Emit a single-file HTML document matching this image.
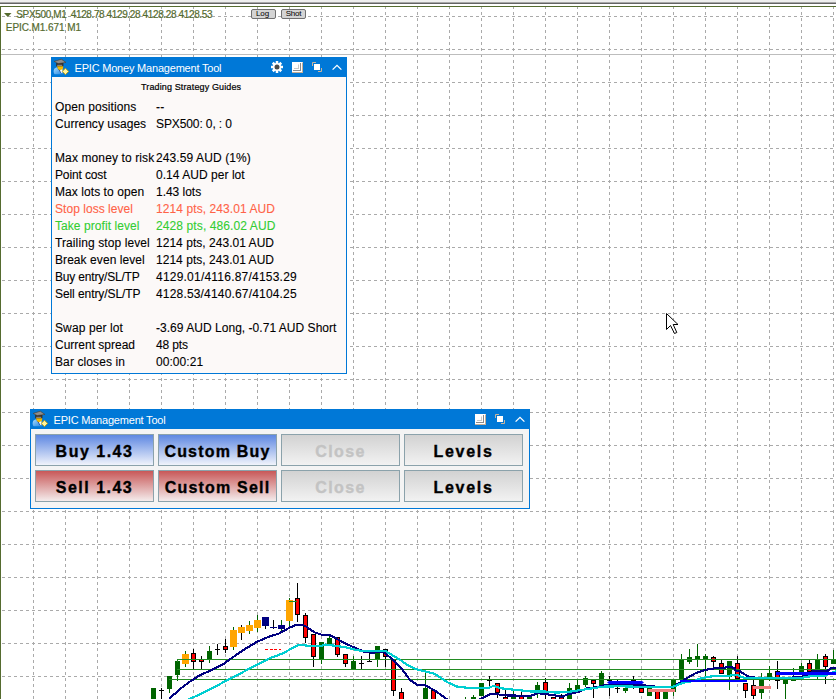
<!DOCTYPE html>
<html><head><meta charset="utf-8">
<style>
html,body{margin:0;padding:0;}
body{width:836px;height:699px;position:relative;overflow:hidden;background:#fff;font-family:"Liberation Sans",sans-serif;}
.abs{position:absolute;}
svg{position:absolute;left:0;top:0;}
.t{position:absolute;white-space:nowrap;}
</style></head><body>
<div class="abs" style="left:0;top:0;width:836px;height:2px;background:#efefef"></div>
<div class="abs" style="left:0;top:2px;width:836px;height:1px;background:#a8a8a8"></div>
<div class="abs" style="left:0;top:3px;width:836px;height:1px;background:#646464"></div>
<svg width="836" height="699" shape-rendering="crispEdges">
<g stroke="#aaaaaa" stroke-width="1" stroke-dasharray="3 3" stroke-dashoffset="5">
<line x1="1" y1="16.5" x2="836" y2="16.5"/>
<line x1="1" y1="49.5" x2="836" y2="49.5"/>
<line x1="1" y1="82.5" x2="836" y2="82.5"/>
<line x1="1" y1="115.5" x2="836" y2="115.5"/>
<line x1="1" y1="148.5" x2="836" y2="148.5"/>
<line x1="1" y1="181.5" x2="836" y2="181.5"/>
<line x1="1" y1="214.5" x2="836" y2="214.5"/>
<line x1="1" y1="247.5" x2="836" y2="247.5"/>
<line x1="1" y1="280.5" x2="836" y2="280.5"/>
<line x1="1" y1="313.5" x2="836" y2="313.5"/>
<line x1="1" y1="346.5" x2="836" y2="346.5"/>
<line x1="1" y1="379.5" x2="836" y2="379.5"/>
<line x1="1" y1="412.5" x2="836" y2="412.5"/>
<line x1="1" y1="445.5" x2="836" y2="445.5"/>
<line x1="1" y1="478.5" x2="836" y2="478.5"/>
<line x1="1" y1="511.5" x2="836" y2="511.5"/>
<line x1="1" y1="544.5" x2="836" y2="544.5"/>
<line x1="1" y1="577.5" x2="836" y2="577.5"/>
<line x1="1" y1="610.5" x2="836" y2="610.5"/>
<line x1="1" y1="643.5" x2="836" y2="643.5"/>
<line x1="1" y1="676.5" x2="836" y2="676.5"/>
</g>
<g stroke="#aaaaaa" stroke-width="1" stroke-dasharray="3 3" stroke-dashoffset="1">
<line x1="33.5" y1="7" x2="33.5" y2="699"/>
<line x1="65.5" y1="7" x2="65.5" y2="699"/>
<line x1="97.5" y1="7" x2="97.5" y2="699"/>
<line x1="129.5" y1="7" x2="129.5" y2="699"/>
<line x1="161.5" y1="7" x2="161.5" y2="699"/>
<line x1="193.5" y1="7" x2="193.5" y2="699"/>
<line x1="225.5" y1="7" x2="225.5" y2="699"/>
<line x1="257.5" y1="7" x2="257.5" y2="699"/>
<line x1="289.5" y1="7" x2="289.5" y2="699"/>
<line x1="321.5" y1="7" x2="321.5" y2="699"/>
<line x1="353.5" y1="7" x2="353.5" y2="699"/>
<line x1="385.5" y1="7" x2="385.5" y2="699"/>
<line x1="417.5" y1="7" x2="417.5" y2="699"/>
<line x1="449.5" y1="7" x2="449.5" y2="699"/>
<line x1="481.5" y1="7" x2="481.5" y2="699"/>
<line x1="513.5" y1="7" x2="513.5" y2="699"/>
<line x1="545.5" y1="7" x2="545.5" y2="699"/>
<line x1="577.5" y1="7" x2="577.5" y2="699"/>
<line x1="609.5" y1="7" x2="609.5" y2="699"/>
<line x1="641.5" y1="7" x2="641.5" y2="699"/>
<line x1="673.5" y1="7" x2="673.5" y2="699"/>
<line x1="705.5" y1="7" x2="705.5" y2="699"/>
<line x1="737.5" y1="7" x2="737.5" y2="699"/>
<line x1="769.5" y1="7" x2="769.5" y2="699"/>
<line x1="801.5" y1="7" x2="801.5" y2="699"/>
<line x1="833.5" y1="7" x2="833.5" y2="699"/>
</g>
<rect x="1" y="54" width="835" height="1" fill="#bdbdbd"/>
<rect x="0" y="6" width="836" height="1" fill="#556b2f"/>
<rect x="0" y="6" width="1" height="693" fill="#556b2f"/>
<g id="chart">
<g>
<rect x="151" y="688" width="5" height="12" fill="#006400"/>
<rect x="161" y="688" width="1" height="12" fill="#000000"/>
<rect x="159" y="690" width="5" height="1" fill="#000000"/>
<rect x="169" y="688" width="1" height="5" fill="#006400"/>
<rect x="167" y="676" width="5" height="13" fill="#006400"/>
<rect x="177" y="674" width="1" height="7" fill="#006400"/>
<rect x="175" y="661" width="5" height="14" fill="#006400"/>
<rect x="185" y="651" width="1" height="13" fill="#006400"/>
<rect x="185" y="654" width="1" height="13" fill="#006400"/>
<rect x="182" y="654" width="7" height="10" fill="#ffa500"/>
<rect x="193" y="649" width="1" height="5" fill="#000000"/>
<rect x="193" y="661" width="1" height="9" fill="#000000"/>
<rect x="191.5" y="653.5" width="4" height="8" fill="#ff0000" stroke="#000000"/>
<rect x="201" y="656" width="1" height="4" fill="#000000"/>
<rect x="201" y="661" width="1" height="9" fill="#000000"/>
<rect x="199.5" y="659.5" width="4" height="2" fill="#ff0000" stroke="#000000"/>
<rect x="209" y="646" width="1" height="6" fill="#006400"/>
<rect x="209" y="658" width="1" height="5" fill="#006400"/>
<rect x="207" y="651" width="5" height="8" fill="#006400"/>
<rect x="217" y="644" width="1" height="11" fill="#000000"/>
<rect x="215" y="649" width="5" height="1" fill="#000000"/>
<rect x="225" y="639" width="1" height="8" fill="#000000"/>
<rect x="225" y="649" width="1" height="4" fill="#000000"/>
<rect x="223.5" y="646.5" width="4" height="3" fill="#ff0000" stroke="#000000"/>
<rect x="233" y="627" width="1" height="20" fill="#006400"/>
<rect x="233" y="630" width="1" height="20" fill="#006400"/>
<rect x="230" y="630" width="7" height="17" fill="#ffa500"/>
<rect x="241" y="625" width="1" height="8" fill="#000000"/>
<rect x="241" y="627" width="1" height="13" fill="#000000"/>
<rect x="238" y="627" width="7" height="6" fill="#ffa500"/>
<rect x="249" y="621" width="1" height="10" fill="#006400"/>
<rect x="249" y="625" width="1" height="9" fill="#006400"/>
<rect x="246" y="625" width="7" height="6" fill="#ffa500"/>
<rect x="257" y="615" width="1" height="13" fill="#006400"/>
<rect x="257" y="620" width="1" height="12" fill="#006400"/>
<rect x="254" y="620" width="7" height="8" fill="#ffa500"/>
<rect x="265" y="625" width="1" height="4" fill="#000000"/>
<rect x="262" y="617" width="7" height="9" fill="#000080"/>
<rect x="273" y="620" width="1" height="9" fill="#000000"/>
<rect x="271" y="627" width="5" height="1" fill="#000000"/>
<rect x="281" y="620" width="1" height="6" fill="#006400"/>
<rect x="281" y="628" width="1" height="5" fill="#006400"/>
<rect x="278" y="625" width="7" height="4" fill="#000080"/>
<rect x="289" y="598" width="1" height="23" fill="#006400"/>
<rect x="289" y="600" width="1" height="28" fill="#006400"/>
<rect x="286" y="600" width="7" height="21" fill="#ffa500"/>
<rect x="297" y="583" width="1" height="16" fill="#000000"/>
<rect x="297" y="614" width="1" height="8" fill="#000000"/>
<rect x="295.5" y="598.5" width="4" height="16" fill="#ff0000" stroke="#000000"/>
<rect x="305" y="613" width="1" height="3" fill="#000000"/>
<rect x="305" y="637" width="1" height="6" fill="#000000"/>
<rect x="303.5" y="615.5" width="4" height="22" fill="#ff0000" stroke="#000000"/>
<rect x="313" y="656" width="1" height="11" fill="#000000"/>
<rect x="311.5" y="634.5" width="4" height="22" fill="#ff0000" stroke="#000000"/>
<rect x="321" y="658" width="1" height="6" fill="#006400"/>
<rect x="319" y="642" width="5" height="17" fill="#006400"/>
<rect x="329" y="636" width="1" height="3" fill="#006400"/>
<rect x="327" y="638" width="5" height="7" fill="#006400"/>
<rect x="337" y="654" width="1" height="3" fill="#000000"/>
<rect x="335.5" y="637.5" width="4" height="17" fill="#ff0000" stroke="#000000"/>
<rect x="345" y="663" width="1" height="4" fill="#000000"/>
<rect x="343.5" y="654.5" width="4" height="9" fill="#ff0000" stroke="#000000"/>
<rect x="353" y="656" width="1" height="6" fill="#006400"/>
<rect x="351" y="661" width="5" height="8" fill="#006400"/>
<rect x="361" y="656" width="1" height="14" fill="#000000"/>
<rect x="359" y="663" width="5" height="1" fill="#000000"/>
<rect x="369" y="653" width="1" height="9" fill="#000000"/>
<rect x="367" y="661" width="5" height="1" fill="#000000"/>
<rect x="377" y="658" width="1" height="9" fill="#006400"/>
<rect x="375" y="646" width="5" height="13" fill="#006400"/>
<rect x="385" y="656" width="1" height="11" fill="#000000"/>
<rect x="383.5" y="649.5" width="4" height="7" fill="#ff0000" stroke="#000000"/>
<rect x="393" y="690" width="1" height="6" fill="#000000"/>
<rect x="391.5" y="659.5" width="4" height="31" fill="#ff0000" stroke="#000000"/>
<rect x="401" y="688" width="1" height="5" fill="#000000"/>
<rect x="399.5" y="692.5" width="4" height="7" fill="#ff0000" stroke="#000000"/>
<rect x="425" y="672" width="1" height="17" fill="#006400"/>
<rect x="423" y="688" width="5" height="12" fill="#006400"/>
<rect x="431.5" y="690.5" width="4" height="9" fill="#ff0000" stroke="#000000"/>
<rect x="465" y="697" width="1" height="3" fill="#006400"/>
<rect x="463" y="699" width="5" height="1" fill="#006400"/>
<rect x="473" y="695" width="1" height="3" fill="#006400"/>
<rect x="471" y="697" width="5" height="3" fill="#006400"/>
<rect x="479" y="683" width="5" height="13" fill="#006400"/>
<rect x="489" y="676" width="1" height="10" fill="#000000"/>
<rect x="487" y="680" width="5" height="1" fill="#000000"/>
<rect x="497" y="692" width="1" height="6" fill="#000000"/>
<rect x="495.5" y="683.5" width="4" height="9" fill="#ff0000" stroke="#000000"/>
<rect x="505" y="689" width="1" height="9" fill="#000000"/>
<rect x="503.5" y="697.5" width="4" height="2" fill="#ff0000" stroke="#000000"/>
<rect x="513" y="691" width="1" height="5" fill="#006400"/>
<rect x="511" y="695" width="5" height="5" fill="#006400"/>
<rect x="521" y="692" width="1" height="4" fill="#000000"/>
<rect x="519.5" y="695.5" width="4" height="4" fill="#ff0000" stroke="#000000"/>
<rect x="527" y="697" width="5" height="3" fill="#006400"/>
<rect x="537" y="682" width="1" height="4" fill="#006400"/>
<rect x="537" y="692" width="1" height="6" fill="#006400"/>
<rect x="535" y="685" width="5" height="8" fill="#006400"/>
<rect x="545" y="678" width="1" height="5" fill="#000000"/>
<rect x="545" y="692" width="1" height="8" fill="#000000"/>
<rect x="543.5" y="682.5" width="4" height="10" fill="#ff0000" stroke="#000000"/>
<rect x="551.5" y="697.5" width="4" height="2" fill="#ff0000" stroke="#000000"/>
<rect x="561" y="694" width="1" height="4" fill="#000000"/>
<rect x="559.5" y="697.5" width="4" height="2" fill="#ff0000" stroke="#000000"/>
<rect x="569" y="683" width="1" height="6" fill="#006400"/>
<rect x="567" y="688" width="5" height="12" fill="#006400"/>
<rect x="577" y="679" width="1" height="7" fill="#006400"/>
<rect x="575" y="685" width="5" height="8" fill="#006400"/>
<rect x="585" y="676" width="1" height="3" fill="#006400"/>
<rect x="585" y="684" width="1" height="3" fill="#006400"/>
<rect x="583" y="678" width="5" height="7" fill="#006400"/>
<rect x="593" y="683" width="1" height="15" fill="#000000"/>
<rect x="591.5" y="680.5" width="4" height="3" fill="#ff0000" stroke="#000000"/>
<rect x="601" y="671" width="1" height="3" fill="#006400"/>
<rect x="599" y="673" width="5" height="12" fill="#006400"/>
<rect x="609" y="676" width="1" height="20" fill="#000000"/>
<rect x="607" y="680" width="5" height="1" fill="#000000"/>
<rect x="617" y="680" width="1" height="13" fill="#000000"/>
<rect x="615" y="688" width="5" height="1" fill="#000000"/>
<rect x="625" y="684" width="1" height="5" fill="#006400"/>
<rect x="625" y="690" width="1" height="3" fill="#006400"/>
<rect x="623" y="688" width="5" height="3" fill="#006400"/>
<rect x="633" y="676" width="1" height="13" fill="#000000"/>
<rect x="631" y="680" width="5" height="1" fill="#000000"/>
<rect x="639.5" y="688.5" width="4" height="4" fill="#ff0000" stroke="#000000"/>
<rect x="649" y="685" width="1" height="4" fill="#006400"/>
<rect x="647" y="688" width="5" height="8" fill="#006400"/>
<rect x="655.5" y="691.5" width="4" height="8" fill="#ff0000" stroke="#000000"/>
<rect x="663" y="691" width="5" height="9" fill="#006400"/>
<rect x="673" y="691" width="1" height="5" fill="#006400"/>
<rect x="671" y="679" width="5" height="13" fill="#006400"/>
<rect x="681" y="654" width="1" height="6" fill="#006400"/>
<rect x="679" y="659" width="5" height="21" fill="#006400"/>
<rect x="689" y="649" width="1" height="9" fill="#006400"/>
<rect x="689" y="661" width="1" height="3" fill="#006400"/>
<rect x="687" y="657" width="5" height="5" fill="#006400"/>
<rect x="697" y="644" width="1" height="13" fill="#006400"/>
<rect x="697" y="659" width="1" height="8" fill="#006400"/>
<rect x="695" y="656" width="5" height="4" fill="#006400"/>
<rect x="705" y="654" width="1" height="3" fill="#006400"/>
<rect x="705" y="659" width="1" height="18" fill="#006400"/>
<rect x="703" y="656" width="5" height="4" fill="#006400"/>
<rect x="713" y="656" width="1" height="2" fill="#000000"/>
<rect x="713" y="661" width="1" height="6" fill="#000000"/>
<rect x="711.5" y="657.5" width="4" height="4" fill="#ff0000" stroke="#000000"/>
<rect x="721" y="659" width="1" height="5" fill="#000000"/>
<rect x="719.5" y="663.5" width="4" height="10" fill="#ff0000" stroke="#000000"/>
<rect x="729" y="676" width="1" height="14" fill="#006400"/>
<rect x="727" y="661" width="5" height="16" fill="#006400"/>
<rect x="737" y="656" width="1" height="8" fill="#000000"/>
<rect x="735.5" y="663.5" width="4" height="15" fill="#ff0000" stroke="#000000"/>
<rect x="745" y="690" width="1" height="8" fill="#000000"/>
<rect x="743.5" y="683.5" width="4" height="7" fill="#ff0000" stroke="#000000"/>
<rect x="753" y="679" width="1" height="7" fill="#000000"/>
<rect x="753" y="695" width="1" height="5" fill="#000000"/>
<rect x="751.5" y="685.5" width="4" height="10" fill="#ff0000" stroke="#000000"/>
<rect x="761" y="673" width="1" height="7" fill="#006400"/>
<rect x="761" y="692" width="1" height="8" fill="#006400"/>
<rect x="759" y="679" width="5" height="14" fill="#006400"/>
<rect x="769" y="666" width="1" height="8" fill="#006400"/>
<rect x="769" y="677" width="1" height="4" fill="#006400"/>
<rect x="767" y="673" width="5" height="5" fill="#006400"/>
<rect x="777" y="661" width="1" height="11" fill="#000000"/>
<rect x="777" y="680" width="1" height="9" fill="#000000"/>
<rect x="775.5" y="671.5" width="4" height="9" fill="#ff0000" stroke="#000000"/>
<rect x="785" y="683" width="1" height="17" fill="#006400"/>
<rect x="783" y="679" width="5" height="5" fill="#006400"/>
<rect x="793" y="668" width="1" height="11" fill="#006400"/>
<rect x="791" y="678" width="5" height="3" fill="#006400"/>
<rect x="801" y="663" width="1" height="4" fill="#006400"/>
<rect x="799" y="666" width="5" height="7" fill="#006400"/>
<rect x="809" y="660" width="1" height="4" fill="#000000"/>
<rect x="807.5" y="663.5" width="4" height="8" fill="#ff0000" stroke="#000000"/>
<rect x="817" y="654" width="1" height="6" fill="#006400"/>
<rect x="817" y="670" width="1" height="9" fill="#006400"/>
<rect x="815" y="659" width="5" height="12" fill="#006400"/>
<rect x="825" y="654" width="1" height="3" fill="#000000"/>
<rect x="825" y="666" width="1" height="18" fill="#000000"/>
<rect x="823.5" y="656.5" width="4" height="10" fill="#ff0000" stroke="#000000"/>
<rect x="833" y="650" width="1" height="10" fill="#006400"/>
<rect x="831" y="659" width="5" height="5" fill="#006400"/>
</g>
<rect x="270" y="627" width="7" height="1" fill="#000080"/>
<rect x="289" y="601" width="8" height="1" fill="#228b22"/>
<rect x="265" y="649" width="3" height="1" fill="#ff0000"/>
<rect x="270" y="649" width="3" height="1" fill="#ff0000"/>
<rect x="274" y="649" width="3" height="1" fill="#ff0000"/>
<rect x="279" y="649" width="2" height="1" fill="#ff0000"/>
<rect x="177" y="659" width="659" height="1" fill="#228b22"/><rect x="177" y="659" width="1" height="3" fill="#228b22"/>
<rect x="177" y="669" width="659" height="1" fill="#228b22"/>
<rect x="169" y="679" width="667" height="1" fill="#228b22"/>
<polyline points="169,699 179.5,689.5 188.8,682.3 194.6,678.7 200,675.1 209.6,671 222.8,664.5 231,658.5 245,649 257,641.8 268,637 278.8,633.6 289.6,627.6 296.8,624.6 301.6,625 304.8,625.7 314.4,632.3 321.5,634.7 329.3,634.7 335.9,638.3 344.3,643 355,647.8 364.6,652 371.8,652.6 384,652 392.6,659.7 402.2,669.3 410,680 417.3,685 424.5,685 435.2,690.7 447.2,699.5" fill="none" stroke="#000080" stroke-width="2.1" stroke-linejoin="round" shape-rendering="crispEdges"/>
<polyline points="479,699.5 489.8,694.4 497,693.8 501.8,695.4 520,695.6 529.6,696.2 538,693.2 547.5,694.4 555.9,695.6 561.9,696.8 567.8,694.4 579.8,691.4 587,688.4 596.6,687.2 603.7,685.4 620,684.8 642,684.8 650,686.5 673.4,686.8 681.8,681.3 687.8,677.7 696.1,672.9 705.7,669.9 714,668.4 725,668.1 726,667.2 732.3,667.2 734.5,668.6 735.5,670.6 739.6,671.1 746,675.2 750.2,677.5 790,678 797,676.6 808,676.5 813,671 829,670.5 831,668.2 836,668" fill="none" stroke="#000080" stroke-width="2.1" stroke-linejoin="round" shape-rendering="crispEdges"/>
<polyline points="188.8,699.5 200,694.1 204.8,692 228.7,679.5 245,671 269,658.5 282,653.7 298.8,644.8 304.8,645.4 312,646 321.5,646 325,644.5 329.3,644.9 336,646 345.5,647.2 353.8,649.3 364,651.4 385.5,651.1 399.8,659.7 407.7,665 416.6,669.3 425.7,671.6 435.2,674 444.8,680.6 448,682.5 456.8,686.5 466.3,687.7 488.6,687.8 493.4,686 501.8,688.4 530,691.4 544,691.4 555.9,692.6 567.8,692 579.8,690.2 591.8,688.4 603.7,686.6 620,686.3 649.5,687 672.2,687 684.2,682.5 693.7,681 700.9,678.3 714.4,675.9 729.6,675.9 731,674.8 736.9,674.8 741.5,677 746,678 801.5,677.8 810.4,676.3 826,675.5 831,673 836,671.3" fill="none" stroke="#00ced1" stroke-width="2.2" stroke-linejoin="round" shape-rendering="crispEdges"/>
<path d="M607 682.5 L609 681 H642 L644 682.5 L642 684 H609Z" fill="#0000ff" shape-rendering="auto"/>
<rect x="680" y="680" width="67" height="2" fill="#0000ff"/>
<rect x="776" y="672" width="60" height="3" fill="#0000ff"/>
<rect x="648" y="689" width="27" height="2.5" fill="#f08080"/>
<rect x="753" y="686" width="18" height="2.5" fill="#f08080"/>
</g>
</svg>
<svg class="abs" style="left:0;top:0" width="320" height="40">
<path d="M4 13 H11.5 L7.75 17Z" fill="#556b2f"/>
<rect x="251.5" y="9.5" width="24" height="9" rx="1.5" ry="1.5" fill="#d4d4d4" stroke="#707070" stroke-width="1"/>
<rect x="281.5" y="9.5" width="24" height="9" rx="1.5" ry="1.5" fill="#d4d4d4" stroke="#707070" stroke-width="1"/>
</svg>
<style>.ol{position:absolute;white-space:nowrap;font-size:10px;line-height:12px;color:#556b2f;-webkit-text-stroke:0.2px #556b2f}</style>
<div class="ol" style="left:16.3px;top:8.5px;letter-spacing:-0.35px">SPX500,M1</div>
<div class="ol" style="left:70.8px;top:8.5px;letter-spacing:-0.38px">4128.78</div>
<div class="ol" style="left:106.6px;top:8.5px;letter-spacing:-0.38px">4129.28</div>
<div class="ol" style="left:142.6px;top:8.5px;letter-spacing:-0.38px">4128.28</div>
<div class="ol" style="left:178.6px;top:8.5px;letter-spacing:-0.38px">4128.53</div>
<div class="ol" style="left:5.8px;top:21.5px;letter-spacing:-0.07px">EPIC.M1.671 M1</div>
<div class="t" style="left:250px;top:8.5px;width:25px;text-align:center;font-size:8px;line-height:10px;color:#000;letter-spacing:-0.1px">Log</div>
<div class="t" style="left:281px;top:8.5px;width:25px;text-align:center;font-size:8px;line-height:10px;color:#000;letter-spacing:-0.2px">Shot</div>

<div class="abs" style="left:51px;top:57px;width:294px;height:296px;border:1px solid #0078d7;border-top:20px solid #0078d7;background:#fcf9f8"></div>
<svg class="abs" style="left:52px;top:58px" width="18" height="18" viewBox="0 0 18 18" shape-rendering="auto">
<defs><linearGradient id="bga" x1="0" y1="0" x2="1" y2="1"><stop offset="0" stop-color="#a8dcff"/><stop offset="1" stop-color="#2084e0"/></linearGradient></defs>
<path d="M1.6 13 Q1.6 10.2 4.2 9.6 L5.6 9.4 L9.2 15.2 L10.5 11 L11.5 12 L11 16.2 L2.6 16.2 Q1.6 15.5 1.6 13Z" fill="url(#bga)"/>
<path d="M5.6 9.4 L9.2 15.2" stroke="#1a3aa0" stroke-width="0.9" fill="none"/>
<path d="M4.8 8 L11.2 8 L11 10.6 L9.4 12.4 L8 12.6 L6 11Z" fill="#f2b900"/>
<path d="M8 12.2 L10.3 11.2 L10.4 14.6 L9.2 15Z" fill="#fff"/>
<path d="M4.2 5 L11.4 5 L11.4 8.3 L4.2 8.3Z" fill="#2e2e2e"/>
<rect x="5.2" y="6.8" width="5" height="0.9" fill="#a8a8a8"/>
<path d="M2.2 3.4 L9.3 1.2 L13.9 4.4 L6.2 5.6Z" fill="#8e8e8e" stroke="#4a3a2a" stroke-width="0.6"/>
<path d="M13.4 10.3 L16.6 13.4 L13.4 16.6 L10.3 13.4Z" fill="#fff4a0" stroke="#c8a000" stroke-width="0.9"/>
</svg>
<div class="t" style="left:74.5px;top:59px;font-size:11px;line-height:18px;color:#fff;letter-spacing:-0.2px">EPIC Money Management Tool</div>
<svg class="abs" style="left:270px;top:60px" width="75" height="15" viewBox="0 0 75 15" shape-rendering="auto">
<g transform="translate(7,7)">
<circle r="4.1" fill="#fff"/>
<g fill="#fff">
<rect x="-1.25" y="-6" width="2.5" height="3"/>
<rect x="-1.25" y="-6" width="2.5" height="3" transform="rotate(45)"/>
<rect x="-1.25" y="-6" width="2.5" height="3" transform="rotate(90)"/>
<rect x="-1.25" y="-6" width="2.5" height="3" transform="rotate(135)"/>
<rect x="-1.25" y="-6" width="2.5" height="3" transform="rotate(180)"/>
<rect x="-1.25" y="-6" width="2.5" height="3" transform="rotate(225)"/>
<rect x="-1.25" y="-6" width="2.5" height="3" transform="rotate(270)"/>
<rect x="-1.25" y="-6" width="2.5" height="3" transform="rotate(315)"/>
</g>
<circle r="2.5" fill="#4a4a4a"/>
</g>
<rect x="22" y="2" width="11" height="11" fill="#fff"/>
<rect x="32" y="2.5" width="1" height="10.5" fill="#c4ae96"/>
<rect x="22" y="12" width="11" height="1" fill="#c4ae96"/>
<rect x="30" y="3" width="1" height="8" fill="#8a8a8a"/>
<rect x="23" y="10" width="8" height="1" fill="#8a8a8a"/>
<rect x="28" y="4.5" width="1" height="4" fill="#c8c8c8"/>
<rect x="24" y="8" width="5" height="1" fill="#c8c8c8"/>
<rect x="44" y="4" width="6" height="6" fill="#fff"/>
<path d="M42.5 6 V2.5 H46" fill="none" stroke="#c9b49c" stroke-width="1"/>
<path d="M48 11.5 H51.5 V8" fill="none" stroke="#c9b49c" stroke-width="1"/>
<path d="M62.6 9.6 L67 5.3 L71.4 9.6" fill="none" stroke="#fff" stroke-width="1.3"/>
</svg>
<div class="t" style="left:141px;top:79.5px;font-size:9px;line-height:14px;color:#000;letter-spacing:0.13px;-webkit-text-stroke:0.2px #000">Trading Strategy Guides</div>
<div class="abs" style="left:0;top:0;font-size:12px;line-height:17px;color:#000;-webkit-text-stroke:0.1px currentColor">
<div class="t" style="left:55px;top:99px;letter-spacing:0.092px">Open positions</div>
<div class="t" style="left:156px;top:99px;letter-spacing:0.200px">--</div>
<div class="t" style="left:55px;top:116px;letter-spacing:0.029px">Currency usages</div>
<div class="t" style="left:156px;top:116px;letter-spacing:-0.108px">SPX500: 0, : 0</div>
<div class="t" style="left:55px;top:150px;letter-spacing:0.113px">Max money to risk</div>
<div class="t" style="left:156px;top:150px;letter-spacing:0.100px">243.59 AUD (1%)</div>
<div class="t" style="left:55px;top:167px;letter-spacing:-0.133px">Point cost</div>
<div class="t" style="left:156px;top:167px;letter-spacing:0.040px">0.14 AUD per lot</div>
<div class="t" style="left:55px;top:184px;letter-spacing:0.067px">Max lots to open</div>
<div class="t" style="left:156px;top:184px;letter-spacing:-0.025px">1.43 lots</div>
<div class="t" style="left:55px;top:201px;color:#ff6347;letter-spacing:0.043px">Stop loss level</div>
<div class="t" style="left:156px;top:201px;color:#ff6347;letter-spacing:0.084px">1214 pts, 243.01 AUD</div>
<div class="t" style="left:55px;top:218px;color:#32cd32;letter-spacing:0.062px">Take profit level</div>
<div class="t" style="left:156px;top:218px;color:#32cd32;letter-spacing:0.105px">2428 pts, 486.02 AUD</div>
<div class="t" style="left:55px;top:235px;letter-spacing:0.100px">Trailing stop level</div>
<div class="t" style="left:156px;top:235px;letter-spacing:0.032px">1214 pts, 243.01 AUD</div>
<div class="t" style="left:55px;top:252px;letter-spacing:0.067px">Break even level</div>
<div class="t" style="left:156px;top:252px;letter-spacing:0.032px">1214 pts, 243.01 AUD</div>
<div class="t" style="left:55px;top:269px;letter-spacing:-0.186px">Buy entry/SL/TP</div>
<div class="t" style="left:156px;top:269px;letter-spacing:0.218px">4129.01/4116.87/4153.29</div>
<div class="t" style="left:55px;top:286px;letter-spacing:-0.080px">Sell entry/SL/TP</div>
<div class="t" style="left:156px;top:286px;letter-spacing:0.173px">4128.53/4140.67/4104.25</div>
<div class="t" style="left:55px;top:320px;letter-spacing:0.109px">Swap per lot</div>
<div class="t" style="left:156px;top:320px;letter-spacing:0.033px">-3.69 AUD Long, -0.71 AUD Short</div>
<div class="t" style="left:55px;top:337px;letter-spacing:0.000px">Current spread</div>
<div class="t" style="left:156px;top:337px;letter-spacing:-0.160px">48 pts</div>
<div class="t" style="left:55px;top:354px;letter-spacing:0.100px">Bar closes in</div>
<div class="t" style="left:156px;top:354px;letter-spacing:0.057px">00:00:21</div>
</div>

<div class="abs" style="left:30px;top:409px;width:498px;height:79px;border:1px solid #0078d7;border-top:20px solid #0078d7;background:#f4f4f4"></div>
<svg class="abs" style="left:31px;top:410px" width="18" height="18" viewBox="0 0 18 18" shape-rendering="auto">
<defs><linearGradient id="bgb" x1="0" y1="0" x2="1" y2="1"><stop offset="0" stop-color="#a8dcff"/><stop offset="1" stop-color="#2084e0"/></linearGradient></defs>
<path d="M1.6 13 Q1.6 10.2 4.2 9.6 L5.6 9.4 L9.2 15.2 L10.5 11 L11.5 12 L11 16.2 L2.6 16.2 Q1.6 15.5 1.6 13Z" fill="url(#bgb)"/>
<path d="M5.6 9.4 L9.2 15.2" stroke="#1a3aa0" stroke-width="0.9" fill="none"/>
<path d="M4.8 8 L11.2 8 L11 10.6 L9.4 12.4 L8 12.6 L6 11Z" fill="#f2b900"/>
<path d="M8 12.2 L10.3 11.2 L10.4 14.6 L9.2 15Z" fill="#fff"/>
<path d="M4.2 5 L11.4 5 L11.4 8.3 L4.2 8.3Z" fill="#2e2e2e"/>
<rect x="5.2" y="6.8" width="5" height="0.9" fill="#a8a8a8"/>
<path d="M2.2 3.4 L9.3 1.2 L13.9 4.4 L6.2 5.6Z" fill="#8e8e8e" stroke="#4a3a2a" stroke-width="0.6"/>
<path d="M13.4 10.3 L16.6 13.4 L13.4 16.6 L10.3 13.4Z" fill="#fff4a0" stroke="#c8a000" stroke-width="0.9"/>
</svg>
<div class="t" style="left:53.5px;top:411px;font-size:11px;line-height:18px;color:#fff;letter-spacing:-0.2px">EPIC Management Tool</div>
<svg class="abs" style="left:453px;top:412px" width="75" height="15" viewBox="0 0 75 15">
<rect x="22" y="2" width="11" height="11" fill="#fff"/>
<rect x="32" y="2.5" width="1" height="10.5" fill="#c4ae96"/>
<rect x="22" y="12" width="11" height="1" fill="#c4ae96"/>
<rect x="30" y="3" width="1" height="8" fill="#8a8a8a"/>
<rect x="23" y="10" width="8" height="1" fill="#8a8a8a"/>
<rect x="28" y="4.5" width="1" height="4" fill="#c8c8c8"/>
<rect x="24" y="8" width="5" height="1" fill="#c8c8c8"/>
<rect x="44" y="4" width="6" height="6" fill="#fff"/>
<path d="M42.5 6 V2.5 H46" fill="none" stroke="#c9b49c" stroke-width="1"/>
<path d="M48 11.5 H51.5 V8" fill="none" stroke="#c9b49c" stroke-width="1"/>
<path d="M62.6 9.6 L67 5.3 L71.4 9.6" fill="none" stroke="#fff" stroke-width="1.3"/>
</svg>
<style>
.btn{position:absolute;width:117px;height:30px;border:1px solid #8ba2ab;font-weight:bold;font-size:16px;line-height:34px;text-align:center;letter-spacing:1px;color:#000;white-space:nowrap;-webkit-text-stroke:0.35px currentColor}
.bb{background:linear-gradient(#5e88e2,#f0f3fb)}
.br{background:linear-gradient(#c85858,#f4ecec)}
.bg{background:linear-gradient(#d2d2d2,#f2f2f2)}
</style>
<div class="btn bb" style="left:35px;top:434px;letter-spacing:1.5px">Buy 1.43</div>
<div class="btn bb" style="left:158px;top:434px;letter-spacing:1.2px">Custom Buy</div>
<div class="btn bg" style="left:281px;top:434px;color:#c3c3c3;letter-spacing:1.4px">Close</div>
<div class="btn bg" style="left:404px;top:434px;letter-spacing:1.7px">Levels</div>
<div class="btn br" style="left:35px;top:470px;letter-spacing:1.5px">Sell 1.43</div>
<div class="btn br" style="left:158px;top:470px;letter-spacing:1.2px">Custom Sell</div>
<div class="btn bg" style="left:281px;top:470px;color:#c3c3c3;letter-spacing:1.4px">Close</div>
<div class="btn bg" style="left:404px;top:470px;letter-spacing:1.7px">Levels</div>

<svg class="abs" style="left:660px;top:308px" width="30" height="34" viewBox="0 0 30 34">
<path d="M6.5 5.5 V21.5 L10.5 17.5 L14.5 25.5 L16.8 24.5 L13.2 16.5 H18 Z" fill="#fff" stroke="#000" stroke-width="1" stroke-linejoin="miter"/>
</svg>

</body></html>
